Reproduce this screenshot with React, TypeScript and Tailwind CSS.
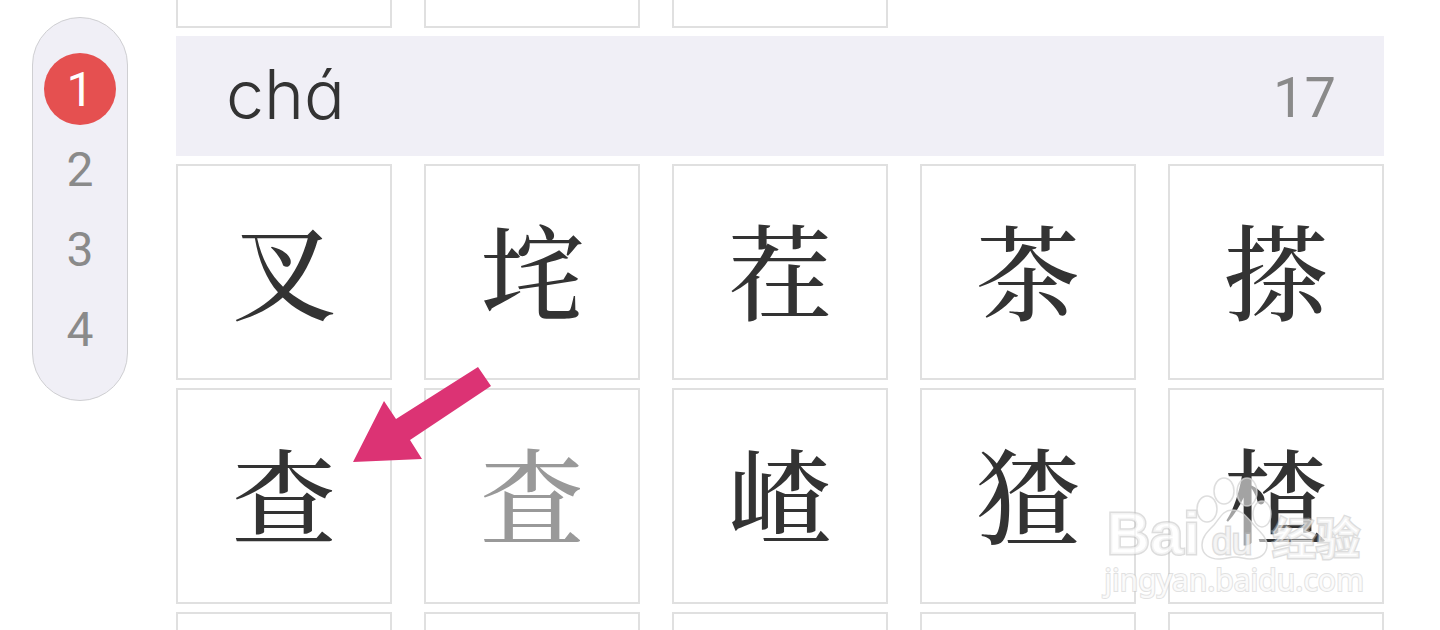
const tones = ['1', '2', '3', '4'];

const characters = [
  { glyph: '叉' },
  { glyph: '垞' },
  { glyph: '茬' },
  { glyph: '茶' },
  { glyph: '搽' },
  { glyph: '查' },
  { glyph: '査', muted: true },
  { glyph: '嵖' },
  { glyph: '猹' },
  { glyph: '楂' },
];

function ToneRail() {
  return (
    <nav
      aria-label="Tones"
      className="mt-[17px] flex w-24 shrink-0 flex-col items-center gap-2 self-start rounded-full border border-[#cfcfd2] bg-[#f0eff6] py-[35px]"
    >
      {tones.map((tone) => (
        <button
          key={tone}
          type="button"
          className={
            tone === '1'
              ? 'flex size-18 items-center justify-center rounded-full bg-[#e55050] pt-0.5 text-5xl text-white'
              : 'flex size-18 items-center justify-center rounded-full pt-0.5 text-5xl text-[#8a8a8a]'
          }
        >
          {tone}
        </button>
      ))}
    </nav>
  );
}

function Arrow() {
  return (
    <svg
      aria-hidden="true"
      viewBox="0 0 140 98"
      className="pointer-events-none absolute -top-[22px] left-44 z-10 h-[98px] w-[140px]"
    >
      <path
        d="M1 96 L32 35 L44 53 L126 1 L139 20 L58 74 L70 93 Z"
        fill="#dc3374"
      />
    </svg>
  );
}

function Watermark() {
  const outline =
    'text-white/65 [-webkit-text-stroke:3px_#bcbcbc80] [paint-order:stroke_fill]';
  return (
    <div
      aria-hidden="true"
      className="pointer-events-none absolute right-5 bottom-2 z-10 flex flex-col items-end whitespace-nowrap"
    >
      <div className="mr-1 flex items-end">
        <span className={`-mr-1 font-['Liberation_Sans',sans-serif] text-6xl leading-[60px] font-bold ${outline}`}>Bai</span>
        <div className="relative mb-1 h-[84px] w-[76px]">
          <svg viewBox="0 0 76 84" className="absolute inset-0 size-full" fill="#ffffff" fillOpacity="0.55" stroke="#d4d4d4" strokeOpacity="0.8" strokeWidth="1.5">
            <ellipse cx="11" cy="33" rx="10" ry="13" />
            <ellipse cx="28" cy="15" rx="10" ry="13" />
            <ellipse cx="51" cy="16" rx="10" ry="14" />
            <ellipse cx="66" cy="38" rx="9" ry="13" />
            <path d="M36 34 C27 34 24 42 18 49 C11 56 6 61 6 69 C6 79 14 83 23 83 C30 83 33 81 39 81 C45 81 48 83 54 83 C64 83 71 78 71 69 C71 61 63 55 57 48 C50 40 46 34 36 34 Z" />
          </svg>
          <span className={`absolute bottom-0 left-4 font-['Liberation_Sans',sans-serif] text-4xl leading-9 ${outline}`}>du</span>
        </div>
        <span className={`font-['Noto_Sans_CJK_SC',sans-serif] text-[44px] leading-[56px] font-bold ${outline}`}>经验</span>
      </div>
      <span className="font-['Noto_Sans',sans-serif] text-[30px] leading-8 text-white/80 [-webkit-text-stroke:2px_#c4c4c480] [paint-order:stroke_fill]">jingyan.baidu.com</span>
    </div>
  );
}

export default function App() {
  return (
    <main className="flex h-screen gap-12 overflow-hidden bg-white pr-14 pl-8 font-['Roboto',sans-serif]">
      <ToneRail />
      <div className="flex min-w-0 flex-1 flex-col gap-2">
        <div className="grid shrink-0 grid-cols-5 gap-8">
          {[0, 1, 2].map((cell) => (
            <div key={cell} className="h-7 border-2 border-t-0 border-[#e0e0e0]" />
          ))}
        </div>
        <header className="flex h-30 shrink-0 items-center justify-between bg-[#f0eff6] pr-12 pl-[50px]">
          <h1 className="pb-1 font-['Inter',sans-serif] text-[68px] leading-none font-[350] text-[#333333] [font-feature-settings:'cv11']">chá</h1>
          <span className="pt-1 text-[56px] leading-none text-[#8a8a8a]">17</span>
        </header>
        <div className="grid shrink-0 grid-cols-5 gap-x-8 gap-y-2">
          {characters.map(({ glyph, muted }) => (
            <div key={glyph} className="relative">
              <button
                type="button"
                lang="zh-CN"
                className={`flex aspect-square w-full items-center justify-center border-2 border-[#e0e0e0] pb-2 font-['Noto_Serif_CJK_SC','Noto_Sans_CJK_SC',serif] text-[104px] leading-none font-medium ${
                  muted ? 'text-[#999999]' : 'text-[#333333]'
                }`}
              >
                {glyph}
              </button>
              {glyph === '查' && <Arrow />}
              {glyph === '楂' && <Watermark />}
            </div>
          ))}
        </div>
        <div className="grid shrink-0 grid-cols-5 gap-8">
          {[0, 1, 2, 3, 4].map((cell) => (
            <div key={cell} className="aspect-square border-2 border-[#e0e0e0]" />
          ))}
        </div>
      </div>
    </main>
  );
}
